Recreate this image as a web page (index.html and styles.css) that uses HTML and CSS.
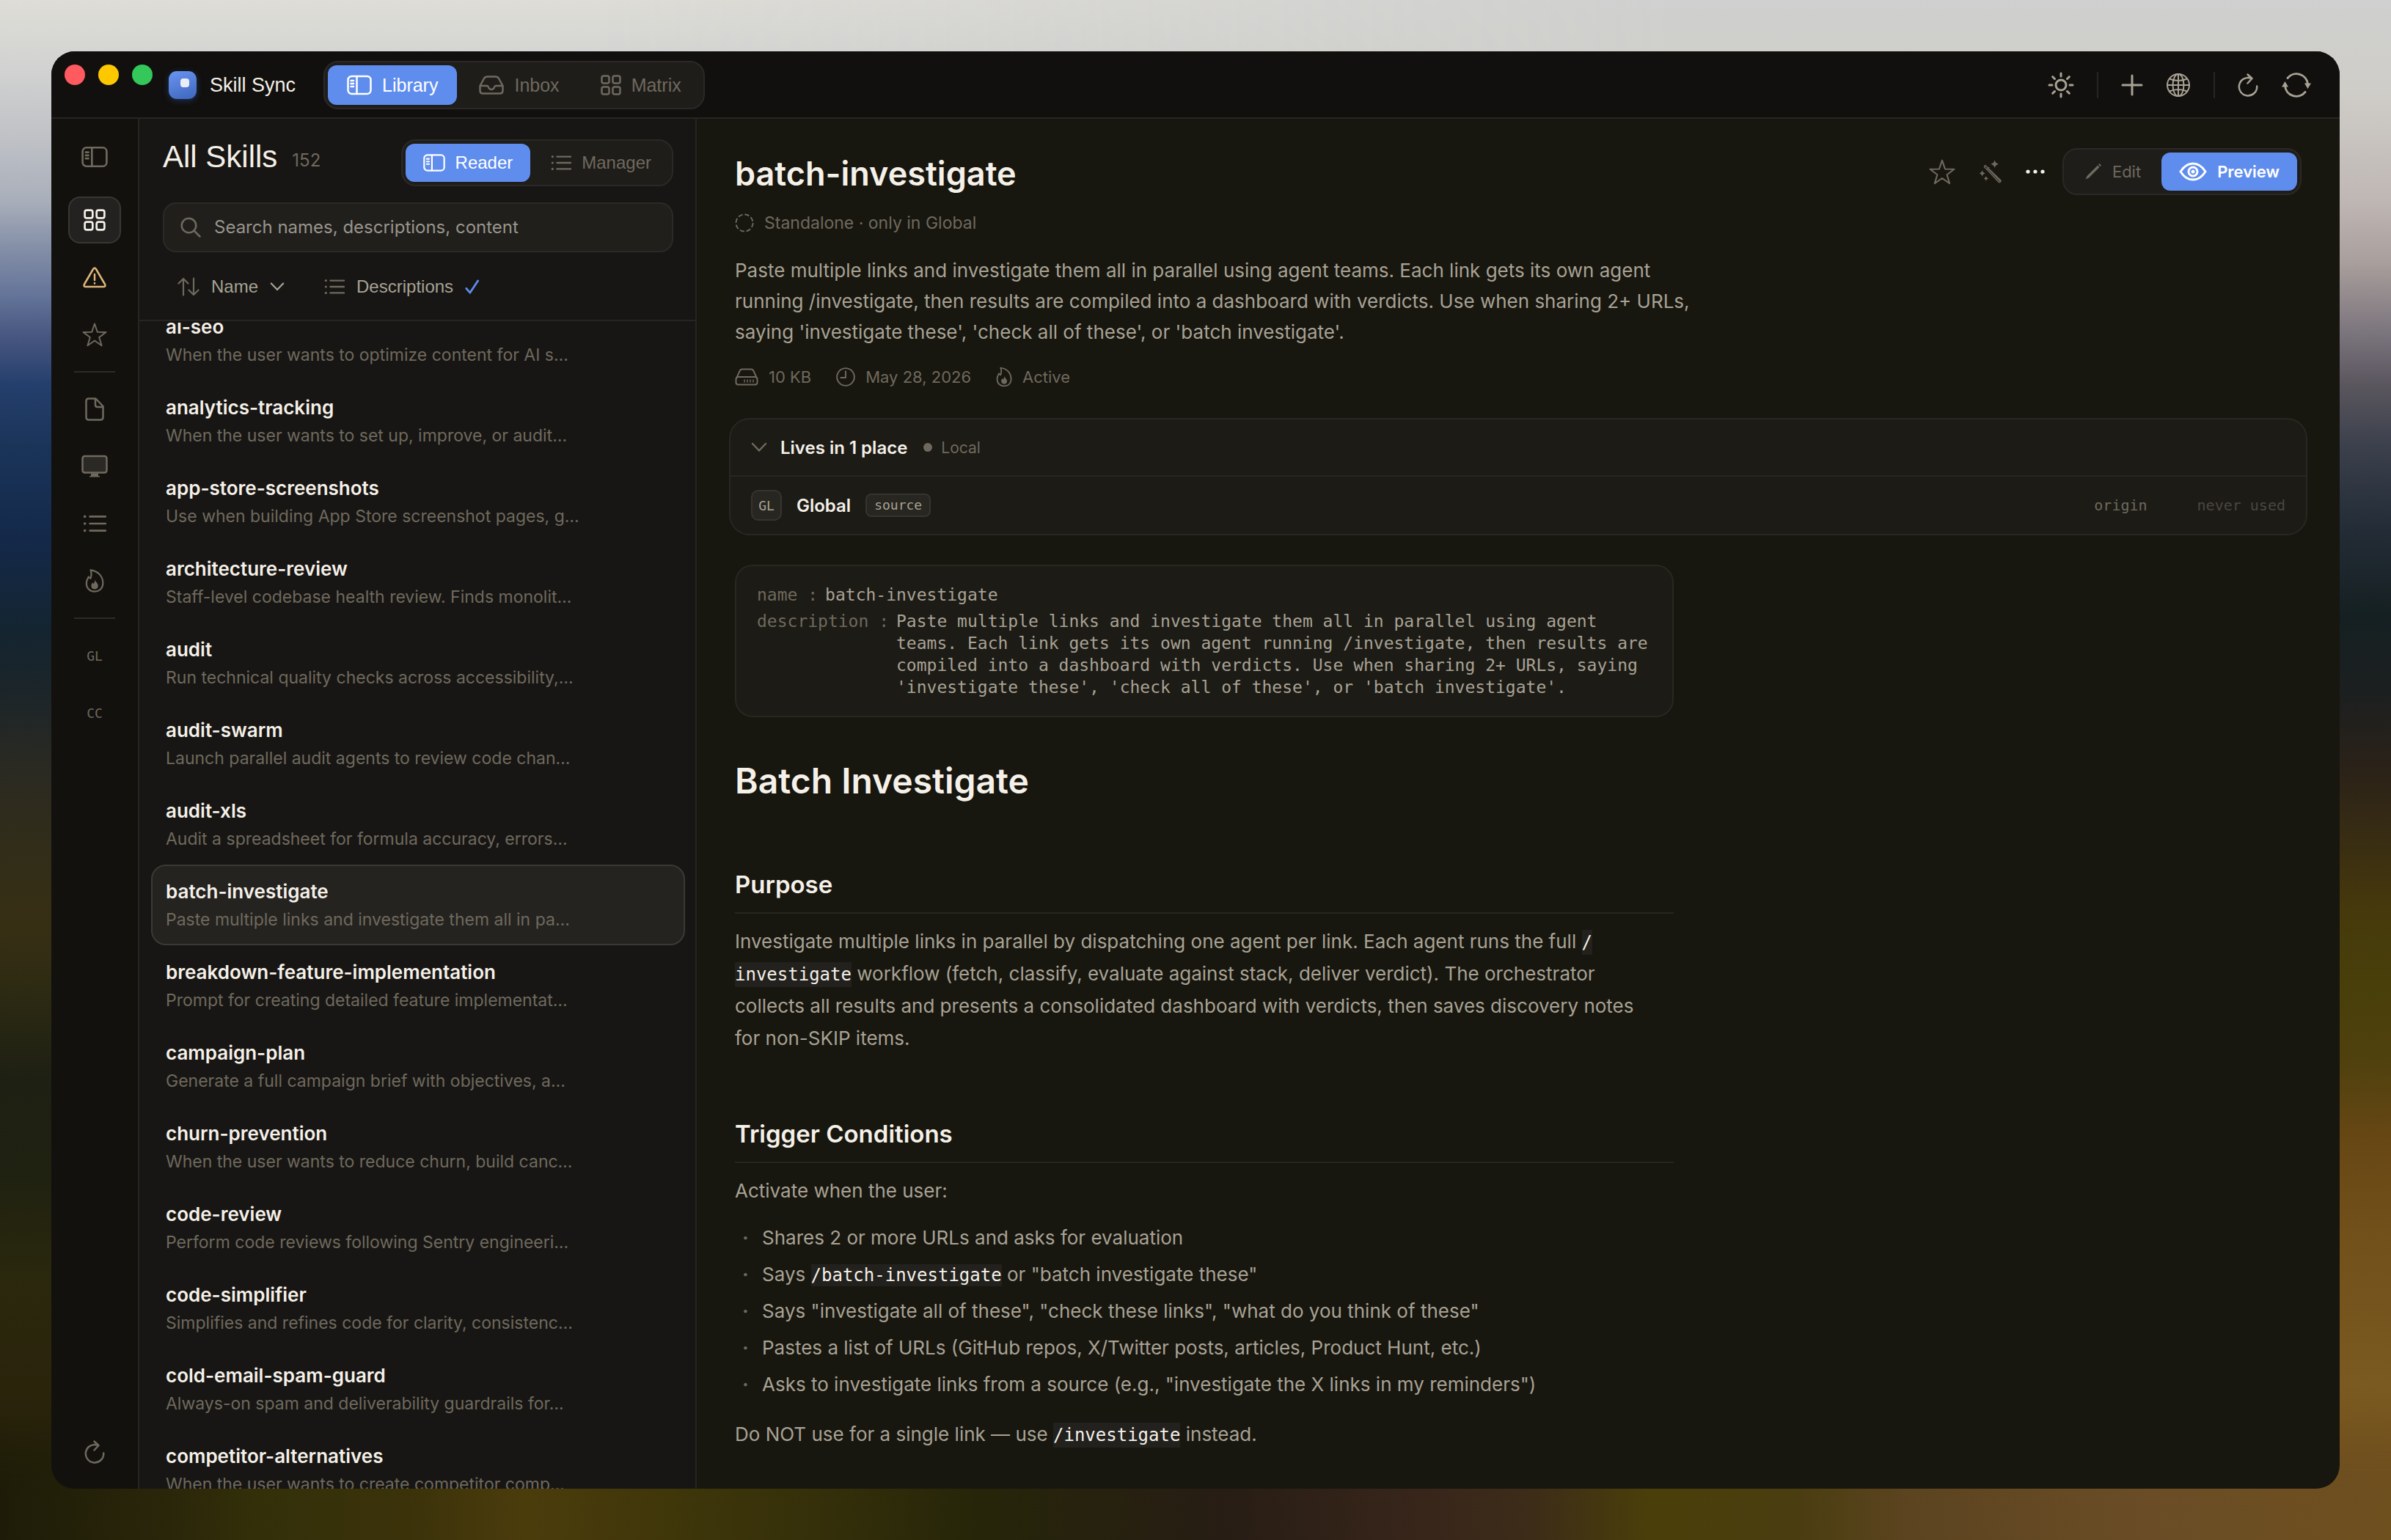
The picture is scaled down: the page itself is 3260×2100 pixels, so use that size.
FILE: index.html
```html
<!DOCTYPE html>
<html lang="en">
<head>
<meta charset="utf-8">
<title>Skill Sync</title>
<link rel="stylesheet" href="styles.css">
</head>
<body>
<svg class="sprite" aria-hidden="true">
  <symbol id="i-sidebar" viewBox="0 0 34 27" stroke-width="2.5"><rect x="1.5" y="1.5" width="31" height="24" rx="5"/><path d="M13.500 2v23M5.500 7.500h3.500M5.500 11.500h3.500M5.500 15.500h3.500"/></symbol>
  <symbol id="i-tray" viewBox="0 0 34 27" stroke-width="2.5"><path d="M1.500 14.500 7 4.500Q8.500 2 11.500 2h11Q25.500 2 27 4.500l5.500 10V21q0 4-4 4h-23q-4 0-4-4zM2 14.500h9q1.500 0 1.800 1.500 1 3.500 4.200 3.500t4.200-3.500q.3-1.500 1.800-1.500h9"/></symbol>
  <symbol id="i-grid" viewBox="0 0 28 28" stroke-width="2.5"><rect x="1.500" y="1.500" width="10" height="10" rx="2.500"/><rect x="16.500" y="1.500" width="10" height="10" rx="2.500"/><rect x="1.500" y="16.500" width="10" height="10" rx="2.500"/><rect x="16.500" y="16.500" width="10" height="10" rx="2.500"/></symbol>
  <symbol id="i-sun" viewBox="0 0 36 36"><circle cx="18" cy="18" r="7"/><path d="M18 2v4M18 30v4M2 18h4M30 18h4M6.700 6.700l2.800 2.800M26.500 26.500l2.800 2.800M29.300 6.700l-2.800 2.800M9.500 26.500l-2.800 2.800"/></symbol>
  <symbol id="i-plus" viewBox="0 0 30 30"><path d="M15 2v26M2 15h26"/></symbol>
  <symbol id="i-globe" viewBox="0 0 34 34"><circle cx="17" cy="17" r="15"/><ellipse cx="17" cy="17" rx="7.500" ry="15"/><path d="M17 2v30M2 17h30M5 8.500q12 5 24 0M5 25.500q12-5 24 0"/></symbol>
  <symbol id="i-reload" viewBox="0 0 28 32" stroke-width="2.5"><path d="M26.200 17.500a12.200 12.200 0 1 1-7.500-10.500M13.500 1.500l6 5.500-6 6.500"/></symbol>
  <symbol id="i-sync" viewBox="0 0 42 36"><path d="M9 8.500A15.500 15.500 0 0 1 36.500 17M33 27.500A15.500 15.500 0 0 1 5.500 19"/><path class="solid" d="M32 15.500h9l-4.500 7.500zM1 20.500h9L5.500 13z"/></symbol>
  <symbol id="i-alert" viewBox="0 0 32 29" stroke-width="2.5"><path d="M14 3.500 2 24q-1.500 3.500 2 3.500h24q3.500 0 2-3.500L18 3.500q-2-3-4 0zM16 10.500v8M16 22.500v.6"/></symbol>
  <symbol id="i-star" viewBox="0 0 34 33"><path d="m17 2 3.800 11.200 11.700.2-9.300 7.100 3.400 11.200L17 25l-9.600 6.700 3.400-11.200-9.300-7.100 11.700-.2z"/></symbol>
  <symbol id="i-file" viewBox="0 0 26 32" stroke-width="2.5"><path d="M5 1.500h9.500L24.500 12v15q0 3.500-3.500 3.500H5q-3.500 0-3.500-3.500V5Q1.500 1.500 5 1.500zM14 2v8q0 3 3 3h7"/></symbol>
  <symbol id="i-monitor" viewBox="0 0 36 31" stroke-width="2.5"><rect class="screen" x="1.500" y="1.500" width="33" height="22.500" rx="3"/><path class="solid" d="M13 25h10v3.500h2V30H11v-1.500h2z"/></symbol>
  <symbol id="i-list" viewBox="0 0 30 24" stroke-width="2.5"><path d="M9 3h20M9 12h20M9 21h20"/><circle class="solid" cx="2.500" cy="3" r="1.700"/><circle class="solid" cx="2.500" cy="12" r="1.700"/><circle class="solid" cx="2.500" cy="21" r="1.700"/></symbol>
  <symbol id="i-flame" viewBox="0 0 26 33" stroke-width="2.2"><path d="M7.500 1.800C18 3 25 11 24.300 21c-.6 6.500-5.300 10.200-11.300 10.200S2 27 1.800 20.500C1.700 16 3.500 13.500 4.800 11q1.200 1.800 2.600 2.300C8.800 9 9 5.500 7.500 1.800z"/><path class="solid" d="M13.500 15c.8 3.500 4.300 4.500 4.300 8.200 0 3-2 4.800-4.800 4.800s-4.600-1.800-4.600-4.600c0-2 .9-3 1.600-4.400l1.700 1.500c1.100-1.500 1.600-3.300 1.800-5.500z"/></symbol>
  <symbol id="i-search" viewBox="0 0 28 28" stroke-width="2.500"><circle cx="11.500" cy="11.500" r="9.800"/><path d="m19 19 7.500 7.500"/></symbol>
  <symbol id="i-sort" viewBox="0 0 30 26" stroke-width="2.2"><path d="M8 24.500V2M1.500 8.500 8 2l6.500 6.500M22 1.500V24M15.500 17.500 22 24l6.500-6.500"/></symbol>
  <symbol id="i-chevron" viewBox="0 0 22 14" stroke-width="2.500"><path d="m2 2 9 9.500L20 2"/></symbol>
  <symbol id="i-check" viewBox="0 0 22 22"><path d="M2 13.500 7.500 20 19.500 2"/></symbol>
  <symbol id="i-wand" viewBox="0 0 34 34" stroke-width="1.600"><path d="M8.300 10.600q-.8-2 1.400-2.300L32 30q-.5 2.500-3 2.500L11.500 13.500 8.300 10.600zM12.500 13l2-1.800M14.500 13.500 30 30"/><path class="solid" d="M23 0q.7 5 6 6-5.300 1-6 6-.7-5-6-6 5.300-1 6-6zM5 14.500q.5 4 4.500 5-4 1-4.500 5-.5-4-4.500-5 4-1 4.500-5zM10.500 23.500q.4 3 3.500 3.500-3.100.5-3.500 3.500-.4-3-3.500-3.500 3.100-.5 3.500-3.500z"/></symbol>
  <symbol id="i-dots" viewBox="0 0 26 6"><circle class="solid" cx="3" cy="3" r="2.600"/><circle class="solid" cx="13" cy="3" r="2.600"/><circle class="solid" cx="23" cy="3" r="2.600"/></symbol>
  <symbol id="i-pencil" viewBox="0 0 24 24"><path class="solid" d="M18 3.500 20.500 6 6 20.500l-4.500 2 2-4.500zM20.500 1l2.500 2.500-1.500 1.500L19 2.500z"/></symbol>
  <symbol id="i-eye" viewBox="0 0 38 26"><path d="M2 13Q9 2 19 2t17 11q-7 11-17 11T2 13z"/><circle cx="19" cy="13" r="6"/><circle class="solid" cx="19" cy="13" r="2.500"/></symbol>
  <symbol id="i-dashed" viewBox="0 0 27 27"><circle cx="13.500" cy="13.500" r="12" stroke-dasharray="6.600 2.820" stroke-linecap="butt"/></symbol>
  <symbol id="i-drive" viewBox="0 0 32 24"><path d="M2 14 6.500 4Q7.500 1.500 10 1.500h12q2.500 0 3.500 2.500L30 14M4.500 12h23q3 0 3 3v4.500q0 3-3 3h-23q-3 0-3-3V15q0-3 3-3z"/><path d="M13 16v3M17 16v3M21 16v3M25 16v3" stroke-width="1.500"/></symbol>
  <symbol id="i-clock" viewBox="0 0 27 27"><circle cx="13.500" cy="13.500" r="12.300"/><path d="M13.500 5.500v9h-7"/></symbol>
</svg>

<div class="window">
  <header class="titlebar">
    <div class="lights"><span class="light red"></span><span class="light yellow"></span><span class="light green"></span></div>
    <span class="logo"><span class="logo-dot"></span></span>
    <span class="app-name">Skill Sync</span>
    <nav class="segmented main-nav">
      <button class="seg on"><svg class="icon w34"><use href="#i-sidebar"/></svg>Library</button>
      <button class="seg"><svg class="icon w34"><use href="#i-tray"/></svg>Inbox</button>
      <button class="seg"><svg class="icon w28"><use href="#i-grid"/></svg>Matrix</button>
    </nav>
    <div class="tools">
      <button class="tool" aria-label="Theme"><svg class="icon w36"><use href="#i-sun"/></svg></button>
      <span class="tool-rule"></span>
      <button class="tool" aria-label="Add"><svg class="icon w30"><use href="#i-plus"/></svg></button>
      <button class="tool" aria-label="Web"><svg class="icon w34 thin"><use href="#i-globe"/></svg></button>
      <span class="tool-rule"></span>
      <button class="tool" aria-label="Reload"><svg class="icon w28"><use href="#i-reload"/></svg></button>
      <button class="tool" aria-label="Sync"><svg class="icon w42"><use href="#i-sync"/></svg></button>
    </div>
  </header>

  <div class="body">
    <nav class="rail">
      <button class="rail-item toggle" aria-label="Toggle sidebar"><svg class="icon w36"><use href="#i-sidebar"/></svg></button>
      <button class="rail-item on" aria-label="All skills"><svg class="icon w30"><use href="#i-grid"/></svg></button>
      <button class="rail-item warn" aria-label="Issues"><svg class="icon w32"><use href="#i-alert"/></svg></button>
      <button class="rail-item" aria-label="Starred"><svg class="icon w34 thin"><use href="#i-star"/></svg></button>
      <span class="rail-rule"></span>
      <button class="rail-item" aria-label="Files"><svg class="icon w26"><use href="#i-file"/></svg></button>
      <button class="rail-item" aria-label="Computer"><svg class="icon w36"><use href="#i-monitor"/></svg></button>
      <button class="rail-item" aria-label="Lists"><svg class="icon w32"><use href="#i-list"/></svg></button>
      <button class="rail-item" aria-label="Active"><svg class="icon w26"><use href="#i-flame"/></svg></button>
      <span class="rail-rule"></span>
      <button class="rail-item mono">GL</button>
      <button class="rail-item mono">CC</button>
      <button class="rail-item last" aria-label="Refresh"><svg class="icon w28"><use href="#i-reload"/></svg></button>
    </nav>

    <section class="library">
      <div class="library-head">
        <div class="library-title">
          <h2 class="heading">All Skills</h2>
          <span class="count">152</span>
          <div class="segmented">
            <button class="seg on"><svg class="icon w30"><use href="#i-sidebar"/></svg>Reader</button>
            <button class="seg"><svg class="icon w28"><use href="#i-list"/></svg>Manager</button>
          </div>
        </div>
        <label class="search"><svg class="icon w28"><use href="#i-search"/></svg><input type="text" aria-label="Search skills" placeholder="Search names, descriptions, content"></label>
        <div class="filters">
          <button class="filter"><svg class="icon w30 dim"><use href="#i-sort"/></svg>Name<svg class="icon w20"><use href="#i-chevron"/></svg></button>
          <button class="filter"><svg class="icon w28 dim"><use href="#i-list"/></svg>Descriptions<svg class="icon w20 blue"><use href="#i-check"/></svg></button>
        </div>
      </div>
      <div class="list-view">
        <ul class="skills">
          <li><a class="skill" href="#"><span class="skill-name">ai-seo</span><span class="skill-text">When the user wants to optimize content for AI s…</span></a></li>
          <li><a class="skill" href="#"><span class="skill-name">analytics-tracking</span><span class="skill-text">When the user wants to set up, improve, or audit…</span></a></li>
          <li><a class="skill" href="#"><span class="skill-name">app-store-screenshots</span><span class="skill-text">Use when building App Store screenshot pages, g…</span></a></li>
          <li><a class="skill" href="#"><span class="skill-name">architecture-review</span><span class="skill-text">Staff-level codebase health review. Finds monolit…</span></a></li>
          <li><a class="skill" href="#"><span class="skill-name">audit</span><span class="skill-text">Run technical quality checks across accessibility,…</span></a></li>
          <li><a class="skill" href="#"><span class="skill-name">audit-swarm</span><span class="skill-text">Launch parallel audit agents to review code chan…</span></a></li>
          <li><a class="skill" href="#"><span class="skill-name">audit-xls</span><span class="skill-text">Audit a spreadsheet for formula accuracy, errors…</span></a></li>
          <li><a class="skill on" href="#"><span class="skill-name">batch-investigate</span><span class="skill-text">Paste multiple links and investigate them all in pa…</span></a></li>
          <li><a class="skill" href="#"><span class="skill-name">breakdown-feature-implementation</span><span class="skill-text">Prompt for creating detailed feature implementat…</span></a></li>
          <li><a class="skill" href="#"><span class="skill-name">campaign-plan</span><span class="skill-text">Generate a full campaign brief with objectives, a…</span></a></li>
          <li><a class="skill" href="#"><span class="skill-name">churn-prevention</span><span class="skill-text">When the user wants to reduce churn, build canc…</span></a></li>
          <li><a class="skill" href="#"><span class="skill-name">code-review</span><span class="skill-text">Perform code reviews following Sentry engineeri…</span></a></li>
          <li><a class="skill" href="#"><span class="skill-name">code-simplifier</span><span class="skill-text">Simplifies and refines code for clarity, consistenc…</span></a></li>
          <li><a class="skill" href="#"><span class="skill-name">cold-email-spam-guard</span><span class="skill-text">Always-on spam and deliverability guardrails for…</span></a></li>
          <li><a class="skill" href="#"><span class="skill-name">competitor-alternatives</span><span class="skill-text">When the user wants to create competitor comp…</span></a></li>
        </ul>
      </div>
    </section>

    <main class="detail">
      <div class="detail-head">
        <h1 class="title">batch-investigate</h1>
        <div class="actions">
          <button class="tool muted" aria-label="Star"><svg class="icon w36 thin"><use href="#i-star"/></svg></button>
          <button class="tool muted" aria-label="Magic"><svg class="icon w32 thin"><use href="#i-wand"/></svg></button>
          <button class="tool bright" aria-label="More"><svg class="icon w26"><use href="#i-dots"/></svg></button>
          <div class="segmented view-mode">
            <button class="seg"><svg class="icon w24"><use href="#i-pencil"/></svg>Edit</button>
            <button class="seg on"><svg class="icon w38"><use href="#i-eye"/></svg>Preview</button>
          </div>
        </div>
      </div>
      <p class="status"><svg class="icon w26 thin"><use href="#i-dashed"/></svg>Standalone · only in Global</p>
      <p class="summary">Paste multiple links and investigate them all in parallel using agent teams. Each link gets its own agent running /investigate, then results are compiled into a dashboard with verdicts. Use when sharing 2+ URLs, saying 'investigate these', 'check all of these', or 'batch investigate'.</p>
      <ul class="meta">
        <li><svg class="icon w32 thin"><use href="#i-drive"/></svg>10 KB</li>
        <li><svg class="icon w26 thin"><use href="#i-clock"/></svg>May 28, 2026</li>
        <li><svg class="icon w22 thin"><use href="#i-flame"/></svg>Active</li>
      </ul>

      <section class="places">
        <div class="places-head">
          <svg class="icon w22"><use href="#i-chevron"/></svg>
          <h3 class="places-title">Lives in 1 place</h3>
          <span class="local">Local</span>
        </div>
        <div class="place">
          <span class="badge">GL</span>
          <span class="place-name">Global</span>
          <span class="tag">source</span>
          <span class="origin">origin</span>
          <span class="used">never used</span>
        </div>
      </section>

      <article class="doc">
        <dl class="front">
          <div class="field"><dt>name :</dt><dd>batch-investigate</dd></div>
          <div class="field"><dt>description :</dt><dd>Paste multiple links and investigate them all in parallel using agent teams. Each link gets its own agent running /investigate, then results are compiled into a dashboard with verdicts. Use when sharing 2+ URLs, saying 'investigate these', 'check all of these', or 'batch investigate'.</dd></div>
        </dl>
        <h1 class="doc-title">Batch Investigate</h1>
        <h2 class="doc-section">Purpose</h2>
        <p>Investigate multiple links in parallel by dispatching one agent per link. Each agent runs the full <code>/<wbr>investigate</code> workflow (fetch, classify, evaluate against stack, deliver verdict). The orchestrator collects all results and presents a consolidated dashboard with verdicts, then saves discovery notes for non-SKIP items.</p>
        <h2 class="doc-section">Trigger Conditions</h2>
        <p>Activate when the user:</p>
        <ul class="bullets">
          <li>Shares 2 or more URLs and asks for evaluation</li>
          <li>Says <code>/batch-investigate</code> or "batch investigate these"</li>
          <li>Says "investigate all of these", "check these links", "what do you think of these"</li>
          <li>Pastes a list of URLs (GitHub repos, X/Twitter posts, articles, Product Hunt, etc.)</li>
          <li>Asks to investigate links from a source (e.g., "investigate the X links in my reminders")</li>
        </ul>
        <p>Do NOT use for a single link — use <code>/investigate</code> instead.</p>
      </article>
    </main>
  </div>
</div>
</body>
</html>
```
FILE: styles.css
```css
:root {
  --ui: "Liberation Sans", Arial, sans-serif;
  --text: Inter, "Liberation Sans", sans-serif;
  --mono: "DejaVu Sans Mono", "Liberation Mono", monospace;
  --bright: #f5f0e8;
  --body: #a8a294;
  --dim: #6f695d;
  --line: #262522;
  --blue: #5f8dee;
}

*, *::before, *::after { box-sizing: border-box; }

body {
  position: relative;
  margin: 0;
  height: 100vh;
  padding: 70px;
  font-family: var(--text);
  font-size: 24px;
  color: var(--body);
  background: linear-gradient(180deg, #deddd7 0%, #d3d4d2 4%, #bfc1c6 9%, #a9afba 13%, #8590a8 16%, #66759a 19%, #46557f 22%, #243f6c 25%, #1a3459 29%, #14294a 35%, #142430 41%, #1c2529 45%, #2b2a22 50%, #312d19 55%, #372f14 60%, #2e2b13 64%, #1e2013 70%, #1f2111 76%, #2a280d 83%, #2a240b 90%, #1e1c08 100%);
}

/* Wallpaper: the right-hand tones fade in over the left, the floor tones over both */
body::before,
body::after { content: ""; position: absolute; inset: 0; }
body::before {
  background: linear-gradient(180deg, #cfd0cf 0%, #cfcdc8 6%, #bfb7b4 13%, #a99f9c 17%, #77717a 22%, #5a565e 25%, #3b404c 29%, #242d38 34%, #152022 40%, #1c1f20 45%, #2b2218 50%, #3a2e12 55%, #46390c 59%, #483f0a 64%, #50410e 69%, #674714 74%, #71501a 80%, #7a5a20 90%, #73521e 95%, #6e4f1e 100%);
  mask-image: linear-gradient(90deg, transparent 25%, #000 70%);
}
body::after {
  top: auto;
  height: 170px;
  background: linear-gradient(90deg, #1e1c08 0%, #2a260a 7%, #333009 11%, #3b320a 17%, #4b3c0c 22%, #3f360a 28%, #35300a 34%, #262509 41%, #271d14 51%, #39261b 60%, #3c2c18 64%, #4a3f0a 69%, #4a3d10 75%, #5c4420 80%, #6a4d26 90%, #6e4f1e 100%);
  mask-image: linear-gradient(180deg, transparent, #000 60%);
}

h1, h2, h3, p, ul, dl, dd { margin: 0; padding: 0; }
ul { list-style: none; }
a { color: inherit; text-decoration: none; }

button {
  margin: 0;
  padding: 0;
  border: 0;
  background: none;
  color: inherit;
  font: inherit;
}

/* Icons */
.sprite { position: absolute; width: 0; height: 0; }
.icon {
  flex: none;
  height: 36px;
  fill: none;
  stroke: currentColor;
  stroke-width: 3;
  stroke-linecap: round;
  stroke-linejoin: round;
}
.thin { stroke-width: 2; }
.solid { fill: currentColor; stroke: none; }
.screen { fill: #2a2925; }
.w20 { width: 20px; }
.w22 { width: 22px; }
.w24 { width: 24px; }
.w26 { width: 26px; }
.w28 { width: 28px; }
.w30 { width: 30px; }
.w32 { width: 32px; }
.w34 { width: 34px; }
.w36 { width: 36px; }
.w38 { width: 38px; }
.w42 { width: 42px; }
.dim { color: var(--dim); }
.blue { color: var(--blue); }

/* Window */
.window {
  position: relative;
  z-index: 1;
  display: flex;
  flex-direction: column;
  height: 100%;
  overflow: hidden;
  border-radius: 32px;
  background: #17160f;
}

.titlebar {
  display: flex;
  align-items: center;
  flex: none;
  height: 92px;
  padding: 2px 38px 0 18px;
  border-bottom: 2px solid var(--line);
  background: #11100e;
  font-family: var(--ui);
}
.lights {
  display: flex;
  align-self: flex-start;
  gap: 18px;
  padding: 16px 22px 0 0;
}
.light { width: 28px; height: 28px; border-radius: 50%; }
.red { background: #ff5a5f; }
.yellow { background: #fdc800; }
.green { background: #34c759; }
.logo {
  display: grid;
  place-items: center;
  width: 38px;
  height: 38px;
  border-radius: 11px;
  background: linear-gradient(160deg, #6a95f0, #3d66bd);
  box-shadow: 0 2px 8px #2f519a80;
}
.logo-dot { width: 12px; height: 12px; margin-left: 6px; margin-bottom: 6px; border-radius: 4px; background: #e8edf8; }
.app-name { margin: 0 38px 0 18px; font-size: 27px; line-height: 32px; color: var(--bright); }

.segmented {
  display: flex;
  gap: 4px;
  padding: 4px;
  border: 2px solid #2a2926;
  border-radius: 20px;
  background: #1e1d1a;
}
.seg {
  display: flex;
  align-items: center;
  gap: 14px;
  height: 52px;
  padding: 0 24px;
  border-radius: 12px;
  font-family: var(--ui);
  color: var(--dim);
}
.seg.on { background: var(--blue); color: #fff; }
.main-nav .seg { height: 54px; padding: 0 26px; font-size: 25px; }

.tools, .actions { display: flex; align-items: center; }
.tools { gap: 31px; margin-left: auto; }
.tool { display: grid; place-items: center; color: var(--body); }
.tool-rule { width: 2px; height: 36px; background: var(--line); }
.tool.muted { color: var(--dim); }
.tool.bright { color: var(--bright); }

.body {
  display: grid;
  grid-template-columns: 120px 760px 1fr;
  flex: 1;
  min-height: 0;
}

/* Rail */
.rail {
  display: flex;
  flex-direction: column;
  align-items: center;
  gap: 14px;
  padding: 20px 0 18px;
  border-right: 2px solid var(--line);
  background: #12110e;
}
.rail-item {
  display: grid;
  place-items: center;
  width: 72px;
  height: 64px;
  border: 2px solid transparent;
  border-radius: 16px;
  color: var(--dim);
}
.rail-item.toggle { margin-bottom: 8px; }
.rail-item.on { border-color: #383734; background: #232220; color: var(--bright); }
.rail-item.warn { color: #dfb678; }
.rail-item.mono { font: 18px var(--mono); }
.rail-item.last { margin-top: auto; }
.rail-rule { width: 56px; height: 2px; margin: 4px 0; background: #2c2b28; }

/* Library column */
.library {
  display: flex;
  flex-direction: column;
  min-height: 0;
  border-right: 2px solid var(--line);
  background: #171614;
}
.library-head {
  flex: none;
  padding: 28px 30px 22px 32px;
  border-bottom: 2px solid var(--line);
}
.library-title { display: flex; align-items: flex-start; }
.heading { font: 42px/48px var(--ui); color: var(--bright); }
.count { margin: 14px auto 0 20px; line-height: 30px; color: var(--dim); }
.search {
  display: flex;
  align-items: center;
  gap: 18px;
  height: 68px;
  margin-top: 22px;
  padding: 0 22px;
  border: 2px solid #2b2a27;
  border-radius: 18px;
  background: #201f1c;
  color: var(--dim);
}
.search input {
  flex: 1;
  border: 0;
  outline: 0;
  padding: 0;
  background: none;
  font: 24px/36px var(--text);
  color: var(--bright);
}
.search input::placeholder { color: #99958c; }
.filters { display: flex; gap: 54px; margin-top: 24px; padding-left: 20px; }
.filter {
  display: flex;
  align-items: center;
  gap: 16px;
  height: 46px;
  font-family: var(--ui);
}
.list-view { flex: 1; min-height: 0; overflow: hidden; }
.skills { margin-top: -29px; padding: 0 14px 0 16px; }
.skill {
  display: flex;
  flex-direction: column;
  height: 110px;
  padding: 16px 18px 14px;
  border: 2px solid transparent;
  border-radius: 20px;
  line-height: 38px;
}
.skill.on { border-color: #3a3936; background: #242320; }
.skill-name { font-size: 26px; font-weight: 600; color: var(--bright); }
.skill-text { font-size: 23px; color: var(--dim); white-space: nowrap; }

/* Detail column */
.detail { min-width: 0; padding: 40px 52px; overflow: hidden; }
.detail-head { display: flex; justify-content: space-between; height: 70px; }
.title { font-size: 45px; font-weight: 600; line-height: 70px; color: var(--bright); }
.actions { align-self: flex-start; gap: 32px; }
.view-mode { margin-left: -8px; }
.view-mode .seg { font-family: var(--text); font-size: 22px; }
.view-mode .on { font-weight: 600; }
.status { display: flex; align-items: center; gap: 14px; height: 32px; margin-top: 16px; font-size: 23px; color: var(--dim); }
.summary { max-width: 1340px; margin-top: 28px; font-size: 26px; line-height: 42px; }
.meta { display: flex; gap: 34px; margin-top: 24px; font-size: 22px; color: var(--dim); }
.meta li { display: flex; align-items: center; gap: 14px; height: 32px; }

.places {
  margin: 40px -8px 0;
  border: 2px solid #282722;
  border-radius: 28px;
  background: #1c1b16;
}
.places-head { display: flex; align-items: center; gap: 18px; height: 76px; padding: 0 28px; color: var(--dim); }
.places-title { font-size: 24px; font-weight: 600; color: var(--bright); }
.local { display: flex; align-items: center; gap: 12px; padding-left: 4px; font-size: 21px; }
.local::before { content: ""; width: 12px; height: 12px; border-radius: 50%; background: var(--dim); }
.place { display: flex; align-items: center; gap: 20px; height: 80px; padding: 0 28px; border-top: 2px solid #282722; }
.badge, .tag { border: 2px solid #35342f; background: #272621; font-family: var(--mono); font-size: 18px; }
.badge { display: grid; place-items: center; width: 42px; height: 42px; border-radius: 10px; }
.tag { padding: 0 10px; border-radius: 8px; line-height: 28px; }
.place-name { font-size: 24px; font-weight: 600; color: var(--bright); }
.origin, .used { font-family: var(--mono); font-size: 20px; color: var(--dim); }
.origin { margin-left: auto; }
.used { margin-left: 48px; color: #4a473f; }

/* Document */
.doc { max-width: 1280px; margin-top: 40px; font-size: 26px; line-height: 44px; }
.doc p { padding-right: 32px; }
.front {
  display: flex;
  flex-direction: column;
  gap: 6px;
  padding: 24px 28px;
  border: 2px solid #282722;
  border-radius: 24px;
  background: #1c1b16;
  font: 23px/30px var(--mono);
}
.field { display: flex; gap: 10px; }
.field dt { flex: none; color: var(--dim); }
.doc-title { margin-top: 54px; font-size: 48px; font-weight: 600; line-height: 66px; color: var(--bright); }
.doc-section {
  margin: 86px 0 16px;
  padding-bottom: 16px;
  border-bottom: 2px solid #262520;
  font-size: 33px;
  font-weight: 600;
  line-height: 44px;
  color: var(--bright);
}
.doc code { padding: 3px 0; background: #22211d; font-family: var(--mono); font-size: 24px; line-height: 1; color: var(--bright); }
.bullets { display: flex; flex-direction: column; gap: 6px; margin: 20px 0 24px; }
.bullets li { display: flex; align-items: baseline; white-space: pre; }
.bullets li::before { content: "·"; flex: none; width: 37px; padding-left: 10px; font-weight: 700; color: var(--dim); }
```
